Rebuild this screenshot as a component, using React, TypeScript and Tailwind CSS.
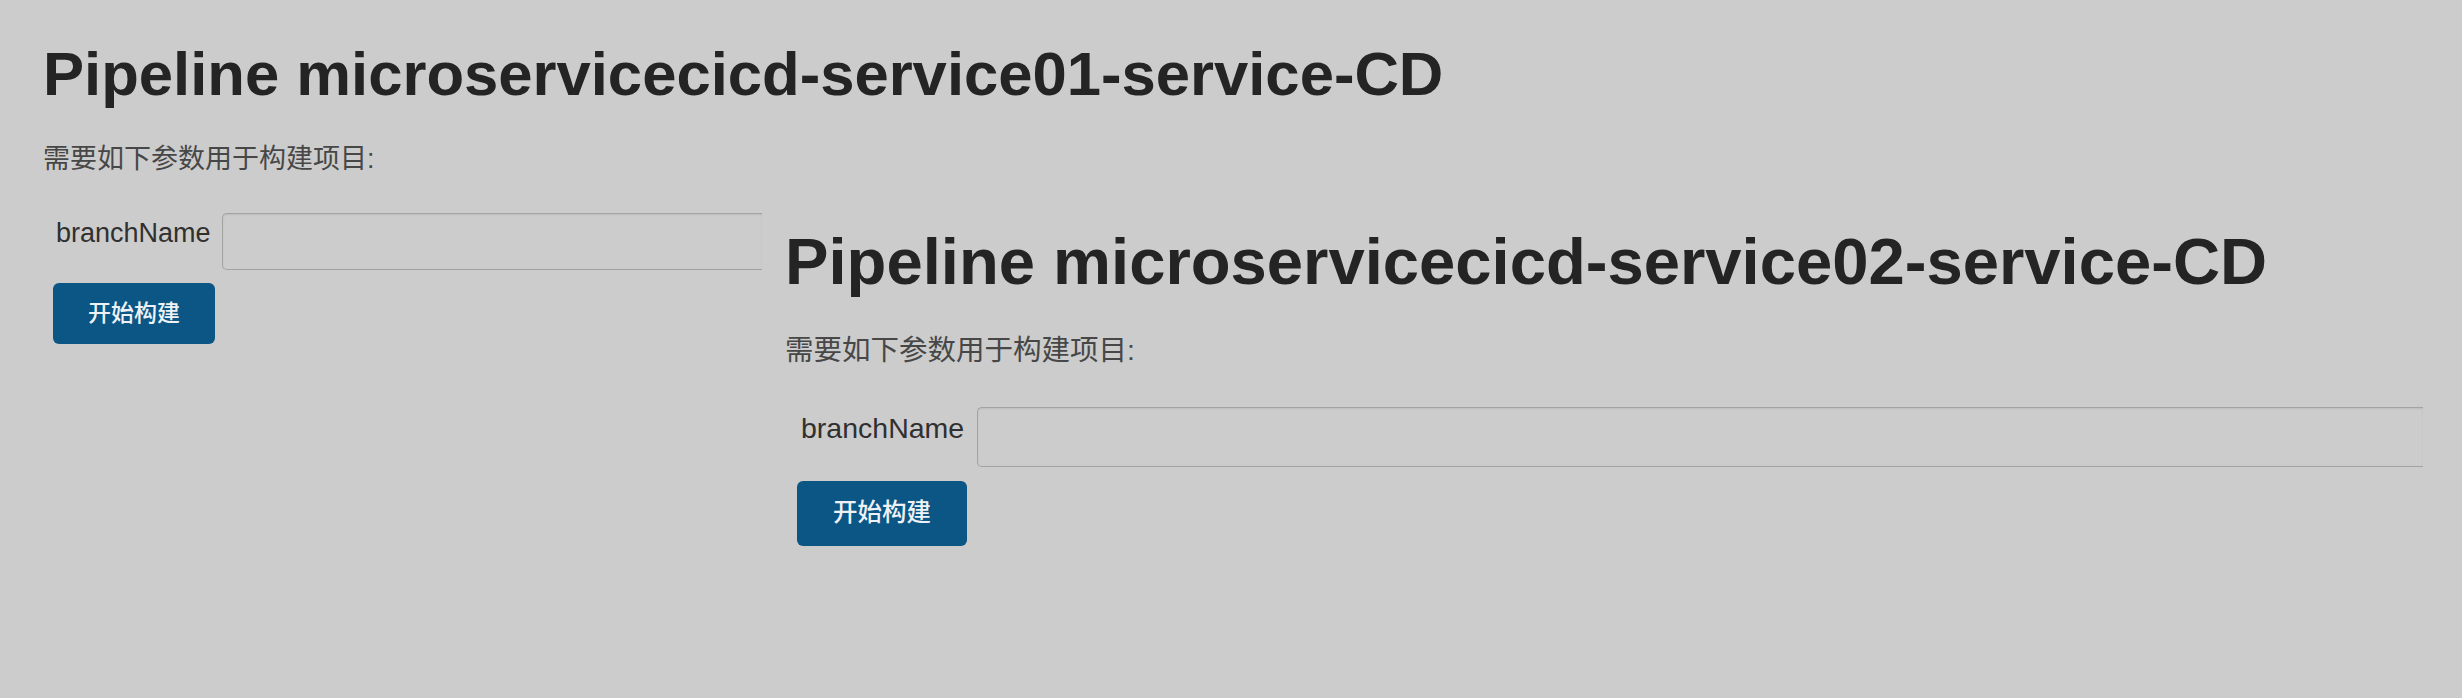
export default function App() {
  return (
    <div className="flex h-[698px] w-full overflow-hidden bg-[#cccccc] font-['Liberation_Sans','Noto_Sans_CJK_SC',sans-serif]">
      <section className="w-[762px] shrink-0 pl-[43px] pt-[38px]">
        <h1 className="whitespace-nowrap text-[61.6px] font-bold leading-[72px] text-[#242424]">
          Pipeline microservicecicd-service01-service-CD
        </h1>
        <p className="mt-[31px] whitespace-nowrap text-[27px] leading-[36px] text-[#474747]">
          需要如下参数用于构建项目:
        </p>
        <div className="mt-[36px] flex items-start">
          <label className="w-[179px] shrink-0 pl-[13px] text-[27px] leading-[40px] text-[#303030]">
            branchName
          </label>
          <input
            type="text"
            className="h-[57px] min-w-0 flex-1 rounded-l-[5px] border-y border-l border-[#a3a3a3] bg-transparent shadow-[inset_0_1px_2px_rgba(0,0,0,0.08)] outline-none"
          />
        </div>
        <button className="ml-[10px] mt-[13px] h-[61px] w-[162px] rounded-[6px] bg-[#0b5685] text-[23px] font-medium text-[#eef2f6]">
          开始构建
        </button>
      </section>
      <section className="min-w-0 flex-1 pl-[23px] pr-[39px] pt-[224px]">
        <h1 className="whitespace-nowrap text-[65.2px] font-bold leading-[76px] text-[#242424]">
          Pipeline microservicecicd-service02-service-CD
        </h1>
        <p className="mt-[31px] whitespace-nowrap text-[28.5px] leading-[38px] text-[#474747]">
          需要如下参数用于构建项目:
        </p>
        <div className="mt-[38px] flex items-start">
          <label className="w-[192px] shrink-0 pl-[16px] text-[28.5px] leading-[42px] text-[#303030]">
            branchName
          </label>
          <input
            type="text"
            className="h-[60px] min-w-0 flex-1 rounded-l-[5px] border-y border-l border-[#a3a3a3] bg-transparent shadow-[inset_0_1px_2px_rgba(0,0,0,0.08)] outline-none"
          />
        </div>
        <button className="ml-[12px] mt-[14px] h-[65px] w-[170px] rounded-[6px] bg-[#0b5685] text-[24.5px] font-medium text-[#eef2f6]">
          开始构建
        </button>
      </section>
    </div>
  );
}
